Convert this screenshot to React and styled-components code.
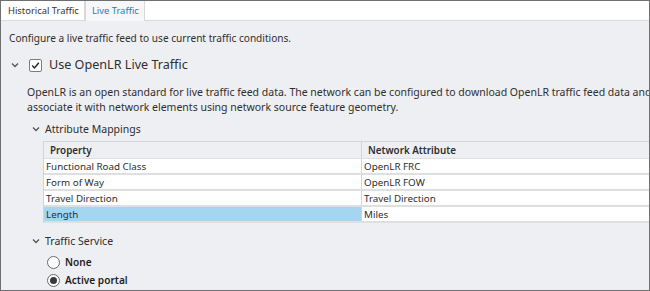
import styled, { createGlobalStyle } from "styled-components";

const Global = createGlobalStyle`
  html, body { margin: 0; padding: 0; background: #fff; }
  body { font-family: "Noto Sans", "Segoe UI", sans-serif; color: #2e2e2e; }
`;

const Frame = styled.div`
  width: 650px;
  height: 291px;
  box-sizing: border-box;
  border: 1px solid #6f6f6f;
  background: #eeeff2;
  overflow: hidden;
  display: flex;
  flex-direction: column;
`;

const TabBar = styled.div`
  height: 19px;
  background: #fff;
  border-bottom: 1px solid #d9dadc;
  display: flex;
  align-items: stretch;
`;

const Tab = styled.div`
  padding: 0 5px 0 6px;
  font-size: 9.4px;
  line-height: 20px;
  white-space: nowrap;
  color: ${(p) => (p.$active ? "#1b7bd0" : "#333")};
  background: ${(p) => (p.$active ? "#f6f7f9" : "#fff")};
  border-left: 1px solid ${(p) => (p.$active ? "#d7d8da" : "transparent")};
  border-right: 1px solid #d7d8da;
  margin-bottom: ${(p) => (p.$active ? "-1px" : "0")};
`;

const Body = styled.div`
  padding: 9px 0 0 8px;
  display: flex;
  flex-direction: column;
`;

const Intro = styled.div`
  font-size: 10.1px;
  line-height: 16px;
  white-space: nowrap;
`;

const Row = styled.div`
  display: flex;
  align-items: center;
  gap: ${(p) => p.$gap || 6}px;
  margin-left: ${(p) => p.$indent || 0}px;
  margin-top: ${(p) => p.$top || 0}px;
  white-space: nowrap;
`;

const Title = styled.span`
  font-size: 12.6px;
  line-height: 20px;
`;

const Para = styled.p`
  margin: 10px 0 0 18px;
  font-size: 10.5px;
  line-height: 15px;
  white-space: nowrap;
`;

const Section = styled.span`
  font-size: 10.5px;
  line-height: 16px;
`;

const Box = styled.span`
  width: 11px;
  height: 11px;
  border: 1px solid #7c7c7c;
  border-radius: 2px;
  background: #fff;
  display: inline-flex;
  align-items: center;
  justify-content: center;
`;

const Table = styled.div`
  margin: 4px 0 0 34px;
  width: 640px;
  border-left: 1px solid #d3d4d6;
  border-top: 1px solid #d3d4d6;
  font-size: 9.8px;
`;

const TRow = styled.div`
  display: grid;
  grid-template-columns: 318px 1fr;
  height: ${(p) => (p.$head ? 16 : 14)}px;
  border-bottom: ${(p) => (p.$head ? 1 : 2)}px solid #dedfe1;
  background: ${(p) => (p.$head ? "#eeeff2" : "#fff")};
`;

const Cell = styled.div`
  padding-left: ${(p) => (p.$head ? 6 : 2)}px;
  line-height: ${(p) => (p.$head ? 17 : 15)}px;
  font-weight: ${(p) => (p.$head ? 600 : 400)};
  border-right: 1px solid #d3d4d6;
  background: ${(p) => (p.$sel ? "#a4d6f2" : "transparent")};
  white-space: nowrap;
  overflow: hidden;
`;

const Radio = styled.span`
  width: 11px;
  height: 11px;
  border: 1px solid #6a6a6a;
  border-radius: 50%;
  background: #fff;
  display: inline-flex;
  align-items: center;
  justify-content: center;
  &::after {
    content: "";
    width: 7px;
    height: 7px;
    border-radius: 50%;
    background: ${(p) => (p.$on ? "#3a3a3a" : "transparent")};
  }
`;

const Option = styled.span`
  font-size: 10.1px;
  line-height: 15px;
  font-weight: 600;
  color: #1e1e1e;
`;

function Chevron() {
  return (
    <svg width="8" height="6" viewBox="0 0 8 6">
      <path d="M1 1.5 L4 4.5 L7 1.5" fill="none" stroke="#555" strokeWidth="1.3" />
    </svg>
  );
}

function Check() {
  return (
    <svg width="9" height="9" viewBox="0 0 9 9">
      <path d="M1.2 4.6 L3.5 7 L7.8 1.8" fill="none" stroke="#222" strokeWidth="1.4" />
    </svg>
  );
}

const rows = [
  ["Functional Road Class", "OpenLR FRC"],
  ["Form of Way", "OpenLR FOW"],
  ["Travel Direction", "Travel Direction"],
  ["Length", "Miles", true],
];

export default function App() {
  return (
    <>
      <Global />
      <Frame>
        <TabBar>
          <Tab>Historical Traffic</Tab>
          <Tab $active>Live Traffic</Tab>
        </TabBar>
        <Body>
          <Intro>Configure a live traffic feed to use current traffic conditions.</Intro>
          <Row $indent={2} $top={9} $gap={10}>
            <Chevron />
            <Row $gap={7}>
              <Box><Check /></Box>
              <Title>Use OpenLR Live Traffic</Title>
            </Row>
          </Row>
          <Para>
            OpenLR is an open standard for live traffic feed data. The network can be configured to download OpenLR traffic feed data and
            <br />
            associate it with network elements using network source feature geometry.
          </Para>
          <Row $indent={23} $top={6} $gap={5}>
            <Chevron />
            <Section>Attribute Mappings</Section>
          </Row>
          <Table>
            <TRow $head>
              <Cell $head>Property</Cell>
              <Cell $head>Network Attribute</Cell>
            </TRow>
            {rows.map(([a, b, sel]) => (
              <TRow key={a}>
                <Cell $sel={sel}>{a}</Cell>
                <Cell>{b}</Cell>
              </TRow>
            ))}
          </Table>
          <Row $indent={23} $top={10} $gap={5}>
            <Chevron />
            <Section>Traffic Service</Section>
          </Row>
          <Row $indent={38} $top={6} $gap={5}>
            <Radio />
            <Option>None</Option>
          </Row>
          <Row $indent={38} $top={3} $gap={5}>
            <Radio $on />
            <Option>Active portal</Option>
          </Row>
        </Body>
      </Frame>
    </>
  );
}
